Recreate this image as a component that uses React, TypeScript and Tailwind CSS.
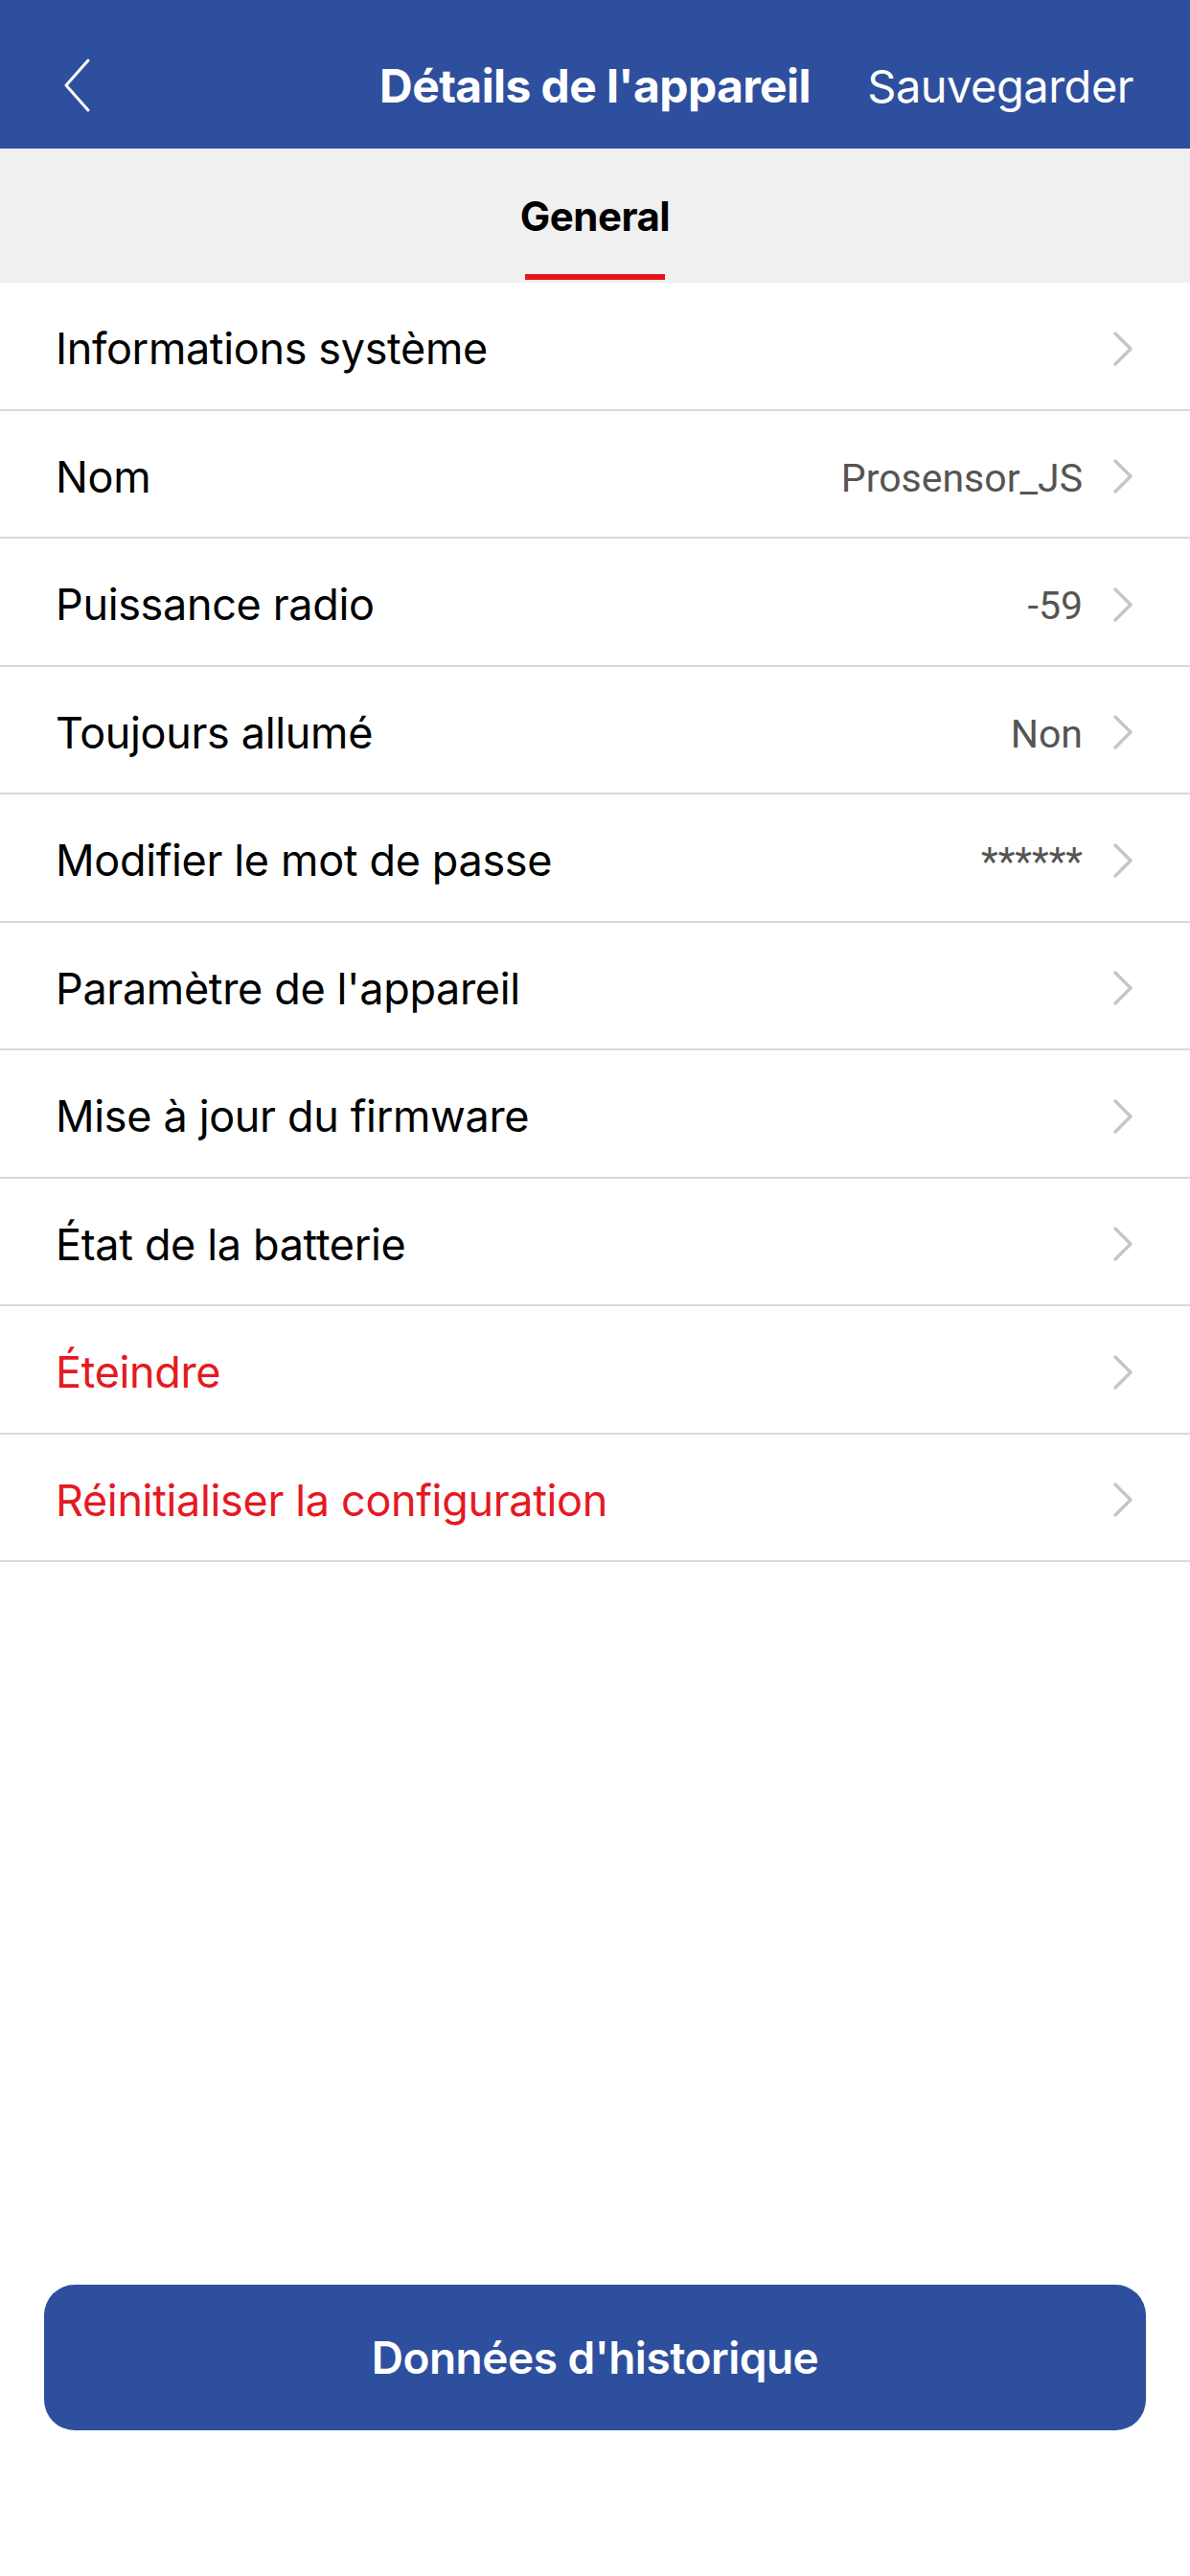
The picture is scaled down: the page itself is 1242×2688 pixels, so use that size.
import React from 'react';

type Row = {
  label: string;
  value?: string;
  danger?: boolean;
};

const rows: Row[] = [
  { label: 'Informations système' },
  { label: 'Nom', value: 'Prosensor_JS' },
  { label: 'Puissance radio', value: '-59' },
  { label: 'Toujours allumé', value: 'Non' },
  { label: 'Modifier le mot de passe', value: '******' },
  { label: "Paramètre de l'appareil" },
  { label: 'Mise à jour du firmware' },
  { label: 'État de la batterie' },
  { label: 'Éteindre', danger: true },
  { label: 'Réinitialiser la configuration', danger: true },
];

const Chevron = () => (
  <svg width="22" height="38" viewBox="0 0 22 38" fill="none" className="shrink-0">
    <path
      d="M3 3 L19 19 L3 35"
      stroke="#c6c6c6"
      strokeWidth="3.5"
      strokeLinecap="round"
      strokeLinejoin="round"
    />
  </svg>
);

export default function App() {
  return (
    <div className="w-[1242px] h-[2688px] bg-white flex flex-col font-['Inter',sans-serif]">
      {/* header */}
      <header className="h-[155px] bg-[#2e4f9e] text-white flex items-center pt-[22px] px-[59px] relative">
        <svg width="30" height="56" viewBox="0 0 30 56" fill="none" className="ml-[6px]">
          <path d="M27 2 L4 28 L27 54" stroke="white" strokeWidth="3" strokeLinecap="round" strokeLinejoin="round" />
        </svg>
        <h1 className="absolute left-0 right-0 top-[24px] bottom-0 flex items-center justify-center text-[48px] font-bold tracking-[-0.6px] pointer-events-none">
          Détails de l'appareil
        </h1>
        <span className="ml-auto mt-[4px] text-[47px] tracking-[-0.5px]">Sauvegarder</span>
      </header>

      {/* tabs */}
      <div className="h-[140px] bg-[#f0f0f0] flex flex-col items-center pt-[45px]">
        <span className="text-[42px] leading-[52px] font-bold text-black tracking-[-0.5px]">General</span>
        <div className="mt-[34px] w-[146px] h-[6px] bg-[#e5151c]" />
      </div>

      {/* list */}
      <div className="flex flex-col">
        {rows.map((r) => (
          <div
            key={r.label}
            className="h-[133.5px] border-b-2 border-[#d9d9d9] flex items-center pl-[58px] pr-[59px] pt-[6px]"
          >
            <span
              className={`text-[45px] tracking-[-0.35px] ${r.danger ? 'text-[#e5191f]' : 'text-black'}`}
            >
              {r.label}
            </span>
            <span className="ml-auto mr-[31px] mt-[4px] text-[41px] text-[#555555] font-['Roboto',sans-serif]">
              {r.value}
            </span>
            <Chevron />
          </div>
        ))}
      </div>

      <div className="flex-1" />

      {/* bottom button */}
      <div className="px-[46px] pb-[152px]">
        <button className="w-full h-[152px] rounded-[32px] bg-[#2e4f9e] text-white text-[46px] font-semibold tracking-[-0.5px]">
          Données d'historique
        </button>
      </div>
    </div>
  );
}
